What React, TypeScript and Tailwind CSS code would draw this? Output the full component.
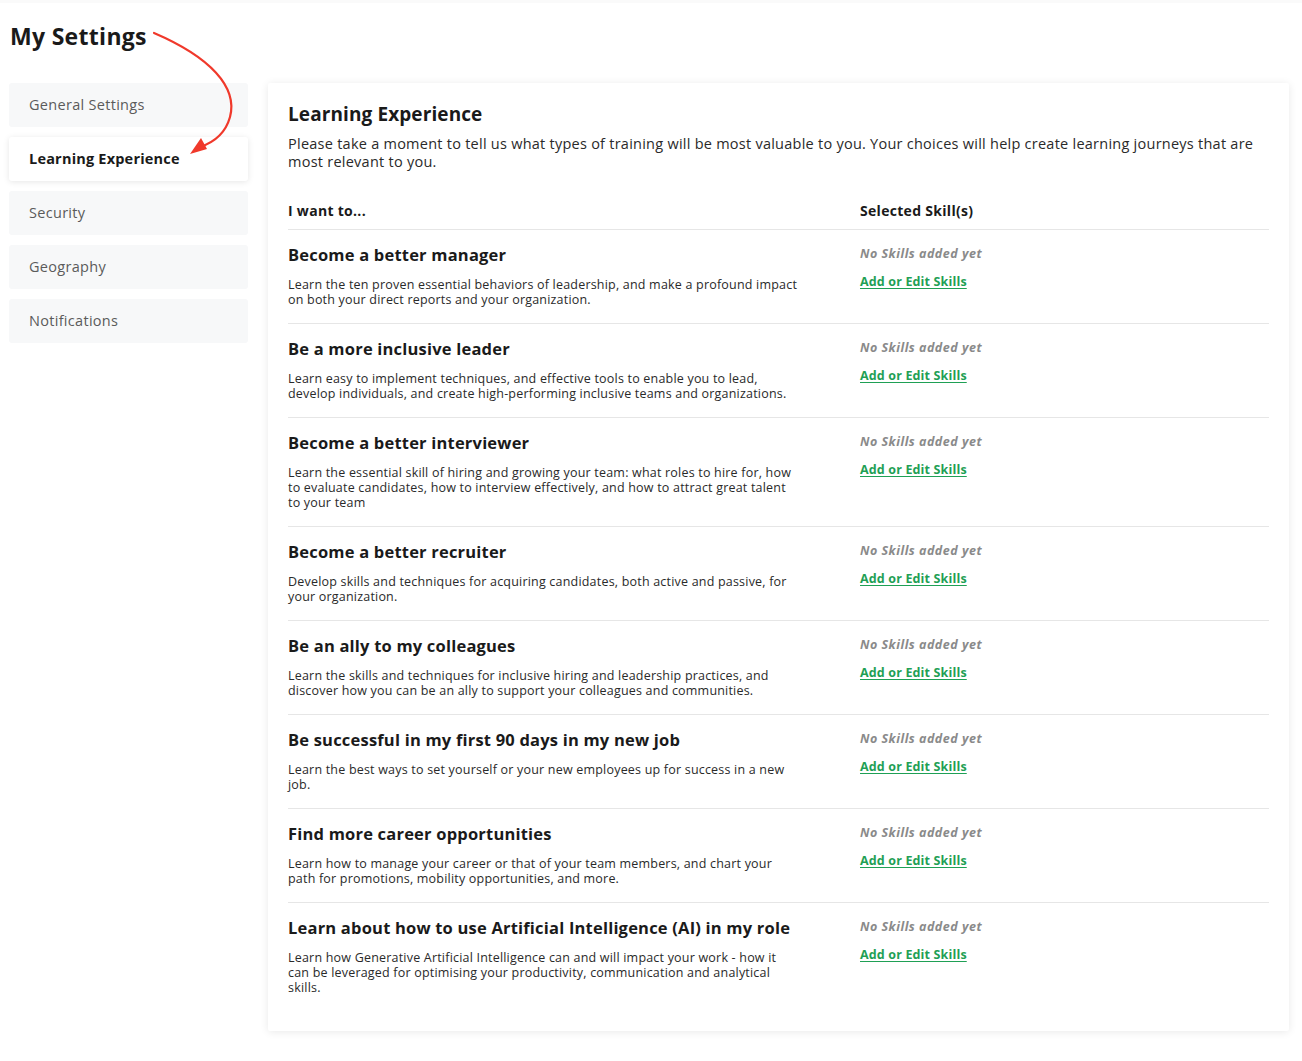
import React from 'react'

const font = { fontFamily: '"Open Sans", "Liberation Sans", sans-serif' }

const navItems = ['General Settings', 'Learning Experience', 'Security', 'Geography', 'Notifications']

const goals = [
  {
    title: 'Become a better manager',
    lines: [
      'Learn the ten proven essential behaviors of leadership, and make a profound impact',
      'on both your direct reports and your organization.',
    ],
  },
  {
    title: 'Be a more inclusive leader',
    lines: [
      'Learn easy to implement techniques, and effective tools to enable you to lead,',
      'develop individuals, and create high-performing inclusive teams and organizations.',
    ],
  },
  {
    title: 'Become a better interviewer',
    lines: [
      'Learn the essential skill of hiring and growing your team: what roles to hire for, how',
      'to evaluate candidates, how to interview effectively, and how to attract great talent',
      'to your team',
    ],
  },
  {
    title: 'Become a better recruiter',
    lines: [
      'Develop skills and techniques for acquiring candidates, both active and passive, for',
      'your organization.',
    ],
  },
  {
    title: 'Be an ally to my colleagues',
    lines: [
      'Learn the skills and techniques for inclusive hiring and leadership practices, and',
      'discover how you can be an ally to support your colleagues and communities.',
    ],
  },
  {
    title: 'Be successful in my first 90 days in my new job',
    lines: ['Learn the best ways to set yourself or your new employees up for success in a new', 'job.'],
  },
  {
    title: 'Find more career opportunities',
    lines: [
      'Learn how to manage your career or that of your team members, and chart your',
      'path for promotions, mobility opportunities, and more.',
    ],
  },
  {
    title: 'Learn about how to use Artificial Intelligence (AI) in my role',
    lines: [
      'Learn how Generative Artificial Intelligence can and will impact your work - how it',
      'can be leveraged for optimising your productivity, communication and analytical',
      'skills.',
    ],
  },
]

export default function App() {
  return (
    <div className="relative min-h-screen bg-white text-[#1c1c1c]" style={font}>
      <div className="h-[3px] bg-[#fafafa]" />
      <h1 className="pl-[10px] pt-[19px] text-[23px] font-bold leading-[29px] tracking-[0.3px] text-[#1a1a1a]">My Settings</h1>

      <svg className="absolute left-[140px] top-[25px]" width="110" height="140" viewBox="0 0 110 140" fill="none">
        <path d="M14 8 C 70 32, 98 62, 90 92 C 85 110, 72 118, 60 122" stroke="#f0392b" strokeWidth="2.2" strokeLinecap="round" />
        <path d="M50 129 L 61 113 L 67 124 Z" fill="#f0392b" />
      </svg>

      <div className="mt-[32px] flex gap-5 pl-[9px] pr-[13px]">
        <nav className="flex w-[239px] shrink-0 flex-col gap-[10px]">
          {navItems.map((item) => {
            const active = item === 'Learning Experience'
            return (
              <div
                key={item}
                className={
                  active
                    ? 'flex h-[44px] items-center rounded-[3px] bg-white pl-5 text-[14.5px] font-bold tracking-[0.2px] text-[#1a1a1a] shadow-[0_1px_6px_rgba(0,0,0,0.1)]'
                    : 'flex h-[44px] items-center rounded-[3px] bg-[#f7f8f9] pl-5 text-[14.5px] tracking-[0.3px] text-[#5b5b5b]'
                }
              >
                {item}
              </div>
            )
          })}
        </nav>

        <main className="flex-1 rounded-[2px] bg-white px-5 pt-[18px] pb-[20px] shadow-[0_1px_8px_rgba(0,0,0,0.09)]">
          <h2 className="text-[19px] font-bold leading-[26px] tracking-[0.1px] text-[#1a1a1a]">Learning Experience</h2>
          <p className="mt-[8px] text-[14.5px] leading-[18px] tracking-[0.25px] text-[#2a2a2a]">
            Please take a moment to tell us what types of training will be most valuable to you. Your choices will help create learning journeys that are most relevant to you.
          </p>

          <div className="mt-[31px] grid grid-cols-[572px_1fr] border-b border-[#e6e6e6] pb-[9px] text-[14px] font-bold leading-[18px] tracking-[0.3px] text-[#1a1a1a]">
            <div>I want to...</div>
            <div>Selected Skill(s)</div>
          </div>

          {goals.map((g, i) => (
            <div
              key={g.title}
              className={
                i === goals.length - 1
                  ? 'grid grid-cols-[572px_1fr] pt-[14px] pb-[16px]'
                  : 'grid grid-cols-[572px_1fr] border-b border-[#e6e6e6] pt-[14px] pb-[16px]'
              }
            >
              <div>
                <h3 className="text-[16.5px] font-bold leading-[22px] tracking-[0.2px] text-[#1a1a1a]">{g.title}</h3>
                <p className="mt-[11px] text-[12.5px] leading-[15px] tracking-[0.2px] text-[#2a2a2a]">
                  {g.lines.map((l) => (
                    <span key={l} className="block whitespace-nowrap">
                      {l}
                    </span>
                  ))}
                </p>
              </div>
              <div className="pt-[2px]">
                <div className="text-[12.5px] font-bold italic leading-[16px] tracking-[0.5px] text-[#8a8a8a]">No Skills added yet</div>
                <a href="#" className="mt-[12px] block text-[12.5px] font-bold leading-[16px] tracking-[0.15px] text-[#1fa055] underline underline-offset-2">
                  Add or Edit Skills
                </a>
              </div>
            </div>
          ))}
        </main>
      </div>
    </div>
  )
}
